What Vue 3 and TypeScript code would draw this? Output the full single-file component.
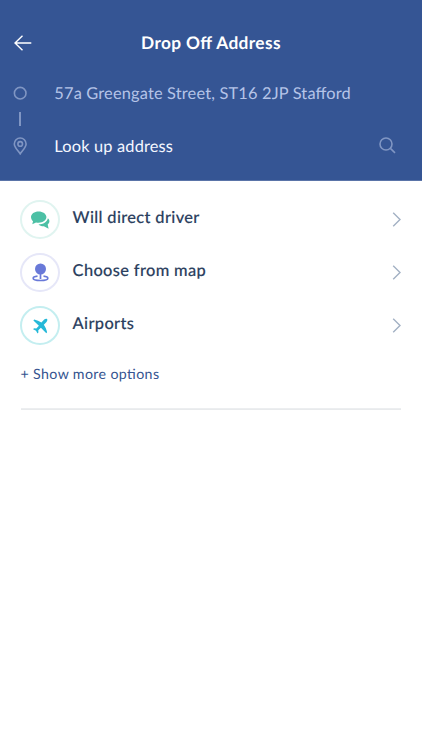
<script setup lang="ts">
interface Option {
  id: 'chat' | 'map' | 'plane'
  label: string
}

const options: Option[] = [
  { id: 'chat', label: 'Will direct driver' },
  { id: 'map', label: 'Choose from map' },
  { id: 'plane', label: 'Airports' },
]
</script>

<template>
  <main class="screen">
    <header class="header">
      <div class="bar">
        <button class="back" aria-label="Back">
          <svg width="18" height="16" viewBox="0 0 18 16"><path d="M17.3 8H1M8.5 .8 1 8l7.5 7.2" /></svg>
        </button>
        <h1 class="title">Drop Off Address</h1>
        <span class="bar-end"></span>
      </div>
      <div class="route">
        <div class="markers">
          <svg class="marker" width="14" height="14" viewBox="0 0 14 14"><circle cx="7.2" cy="7.2" r="5.8" /></svg>
          <span class="link"></span>
          <svg class="marker" width="14" height="18" viewBox="0 0 14 18">
            <path d="M7.200 16.900C5.700 14.400 1.300 10.300 1.300 6.900a5.900 5.900 0 0 1 11.800 0c0 3.400-4.400 7.500-5.900 10z" />
            <circle cx="7.2" cy="6.900" r="2.300" />
          </svg>
        </div>
        <div class="fields">
          <p class="pickup">57a Greengate Street, ST16 2JP Stafford</p>
          <p class="lookup">Look up address</p>
        </div>
        <svg class="search" width="17" height="17" viewBox="0 0 17 17"><circle cx="7" cy="7" r="6" /><path d="m11.400 11.400 4.600 4.400" /></svg>
      </div>
    </header>

    <section class="body">
      <ul class="options">
        <li v-for="option in options" :key="option.id" class="option">
          <span class="badge" :class="option.id">
            <svg v-if="option.id === 'chat'" width="20" height="20" viewBox="0 0 20 20">
              <path d="M8.600 1.400C4.300 1.400 1 3.800 1 7c0 1.900 1 3.400 2 4.300l-.7 3 3.700-1.900c.8.200 1.700.3 2.600.3 4.300 0 7.800-2.500 7.800-5.700s-3.500-5.600-7.800-5.600z" />
              <path d="M17.900 8.300c.9.8 1.500 1.800 1.500 2.900 0 1.300-.7 2.500-1.700 3.200l.9 4.400-4.700-2.500c-2.200.1-4.200-.6-5.400-1.800 4.700-.1 8.700-2.400 9.400-6.200z" />
            </svg>
            <svg v-else-if="option.id === 'map'" width="20" height="20" viewBox="0 0 20 20">
              <circle cx="10.500" cy="6" r="5.500" />
              <path class="stroke" d="M10.500 10v6M7.500 13.100c-2.800.3-4.300 1-4.300 2.100 0 1.400 3 2.300 7.300 2.300s7.300-.9 7.300-2.300c0-1.100-1.500-1.800-4.300-2.100" />
            </svg>
            <svg v-else width="20" height="20" viewBox="0 0 20 20">
              <path d="M17 3c.7.700.4 1.900-.5 2.900l-2.700 2.900c1.600 2.300 2.700 4.700 3.300 7.500l-.8.9-5.400-5.500-2.600 2.600.1 2.300-.9.800-1.500-2.700-2.900-1.500.9-.9 2.300.1 2.600-2.600L3.400 4.500l.8-.9c2.700.6 5.100 1.600 7.200 3l2.800-3C15.100 2.700 16.300 2.300 17 3z" />
            </svg>
          </span>
          <span class="label">{{ option.label }}</span>
          <svg class="chevron" width="9" height="15" viewBox="0 0 9 15"><path d="M1.200 .8 8 7.500 1.200 14.200" /></svg>
        </li>
      </ul>
      <a class="more">+ Show more options</a>
      <hr class="rule" />
    </section>
  </main>
</template>

<style>
body {
  background: #fff;
}
</style>

<style scoped>
.screen {
  min-height: 750px;
  font-family: Lato, sans-serif;
  font-feature-settings: 'liga' 1;
  text-rendering: geometricPrecision;
  background: #fff;
}
.header {
  box-sizing: border-box;
  height: 181px;
  padding: 28px 14px 0;
  background: #355594;
  border-bottom: 1px solid #5a74a8;
}
.bar {
  display: flex;
  align-items: center;
  height: 30px;
}
.back,
.bar-end {
  width: 40px;
}
.back {
  display: flex;
  padding: 0;
  border: 0;
  background: none;
}
svg {
  display: block;
  flex: none;
  fill: none;
}
.back svg {
  stroke: #fff;
  stroke-width: 1.4;
}
.title {
  flex: 1;
  margin: 0;
  color: #fff;
  font-size: 17.3px;
  font-weight: 700;
  line-height: 28px;
  letter-spacing: 0.38px;
  text-align: center;
}
.route {
  display: flex;
  margin-top: 21px;
}
.markers {
  display: flex;
  flex-direction: column;
  align-items: center;
  width: 12px;
  padding-top: 7px;
}
.marker {
  stroke: #8096c3;
  stroke-width: 1.6;
}
.link {
  width: 2px;
  height: 14px;
  margin: 12px 0 11px;
  background: #8096c3;
}
.fields {
  flex: 1;
  margin-left: 28.3px;
  padding-top: 1px;
  font-size: 16.4px;
  line-height: 27px;
}
.fields p {
  margin: 0 0 26px;
  letter-spacing: 0.16px;
  white-space: nowrap;
}
.pickup {
  color: #b5c4e8;
}
.lookup {
  color: #f4f7ff;
}
.search {
  margin: 58px 12px 0 0;
  stroke: #8096c3;
  stroke-width: 1.6;
}
.body {
  padding: 12px 21px 0 20px;
}
.options {
  margin: 0;
  padding: 0;
  list-style: none;
}
.option {
  display: flex;
  align-items: center;
  height: 53px;
}
.badge {
  box-sizing: border-box;
  display: flex;
  align-items: center;
  justify-content: center;
  width: 40px;
  height: 39px;
  border: 2px solid;
  border-radius: 50%;
}
.badge svg {
  fill: currentColor;
}
.badge .stroke {
  fill: none;
  stroke: currentColor;
  stroke-width: 1.700;
}
.chat {
  color: #4cc0a5;
  border-color: #e0f4f0;
}
.map {
  color: #6979d8;
  border-color: #e6e7f8;
}
.plane {
  color: #25b8d8;
  border-color: #c4eef0;
}
.label {
  flex: 1;
  margin: -3px 0 0 12.6px;
  color: #2b405e;
  font-size: 16.400px;
  font-weight: 500;
  line-height: 24px;
  letter-spacing: 0.36px;
  -webkit-text-stroke: 0.15px currentColor;
}
.chevron {
  stroke: #a3b1c4;
  stroke-width: 1.400;
}
.more {
  display: block;
  margin: 11px 0 0 0.5px;
  color: #355490;
  font-size: 14.200px;
  line-height: 24px;
  letter-spacing: 0.37px;
}
.rule {
  height: 1px;
  margin: 21px 0 0 1px;
  border: 0;
  border-bottom: 1px solid #e8eaec;
  background: #eceef0;
}
</style>
